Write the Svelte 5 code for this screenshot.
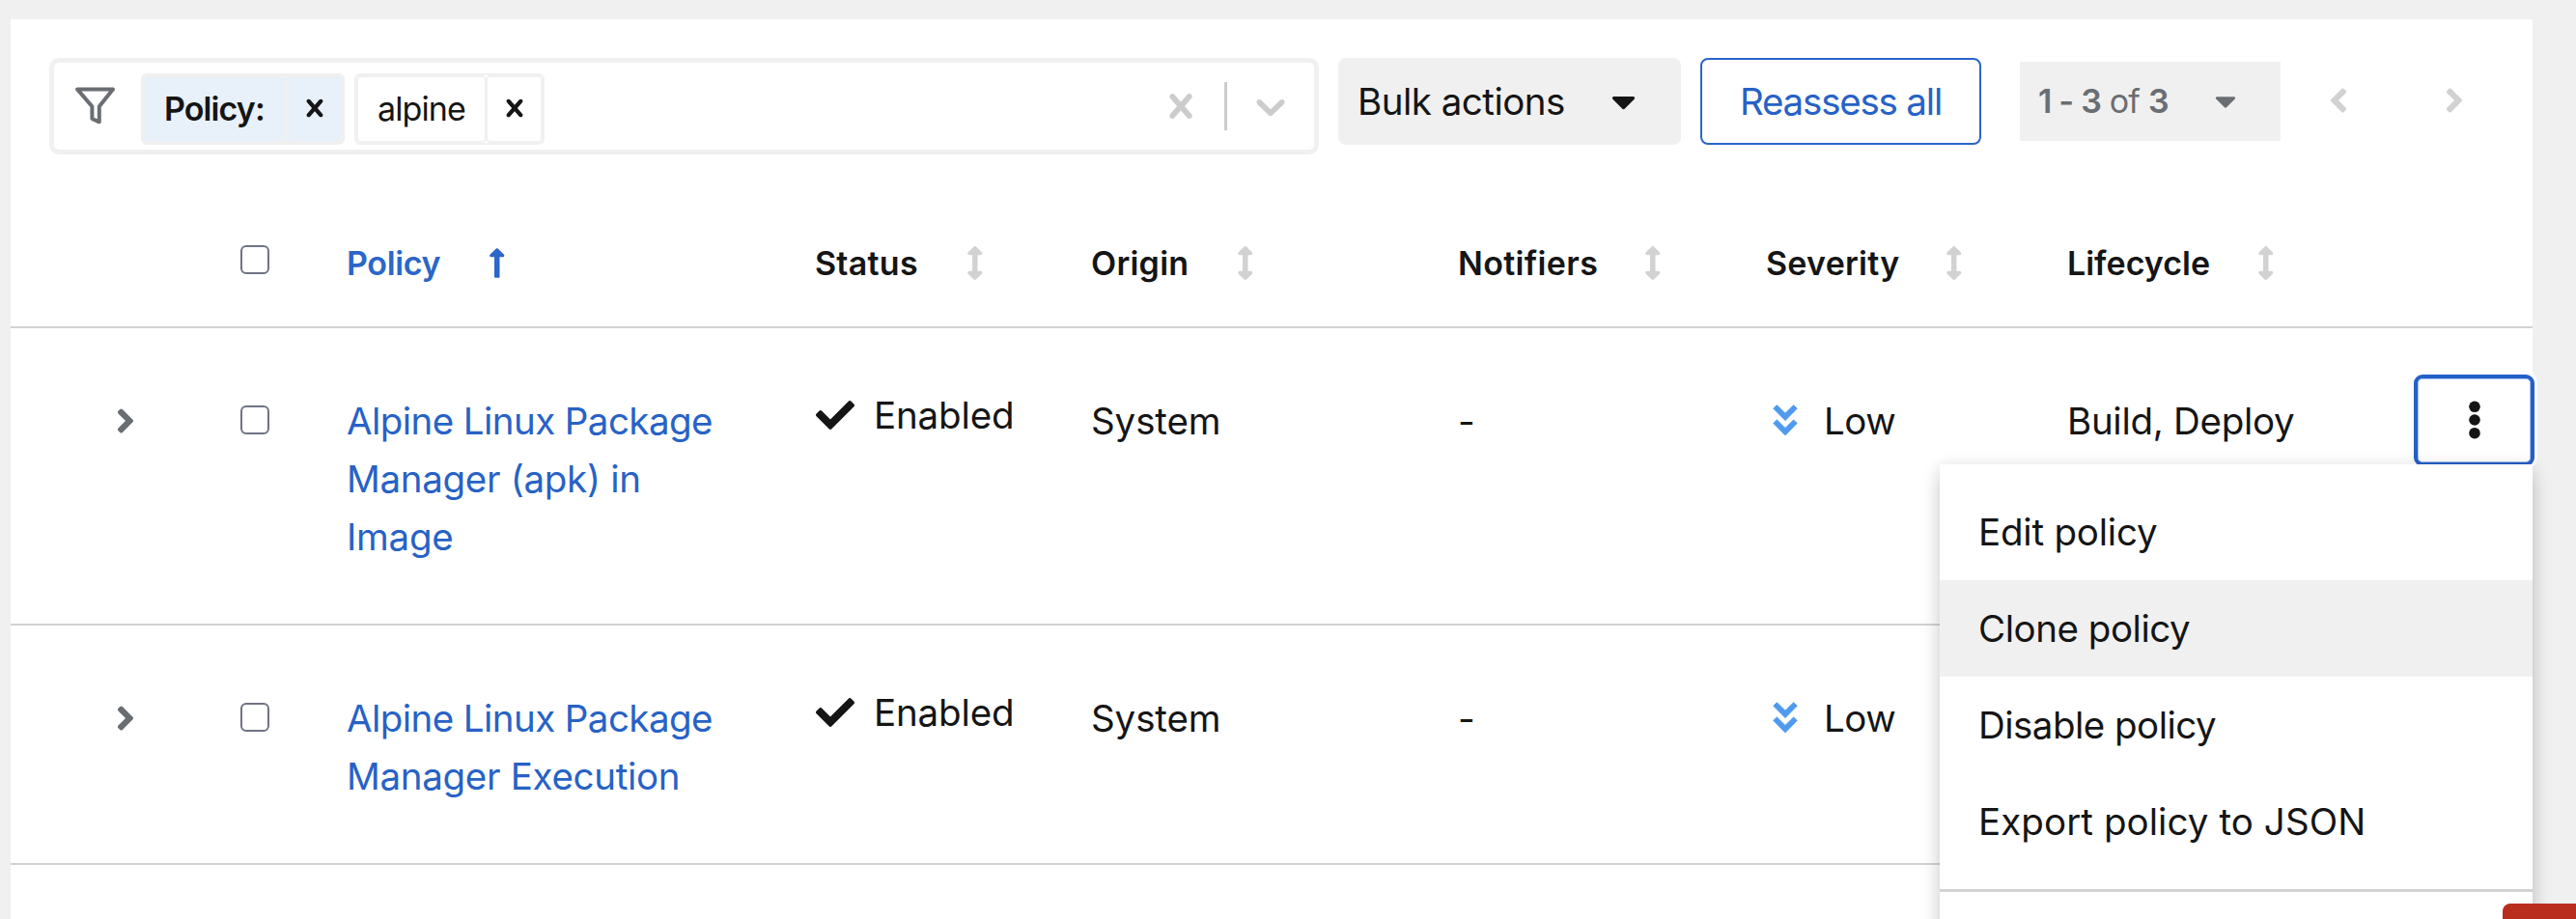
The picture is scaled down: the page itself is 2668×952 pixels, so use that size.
<script>
  const columns = [
    { label: 'Policy', sorted: true, cls: 'policy' },
    { label: 'Status', cls: 'status' },
    { label: 'Origin', cls: 'origin' },
    { label: 'Notifiers', cls: 'notifiers' },
    { label: 'Severity', cls: 'severity' },
    { label: 'Lifecycle', cls: 'lifecycle' }
  ];

  const policies = [
    {
      name: ['Alpine Linux Package', 'Manager (apk) in', 'Image'],
      status: 'Enabled', origin: 'System', notifiers: '-', severity: 'Low',
      lifecycle: 'Build, Deploy', menuOpen: true
    },
    {
      name: ['Alpine Linux Package', 'Manager Execution'],
      status: 'Enabled', origin: 'System', notifiers: '-', severity: 'Low',
      menuOpen: false
    }
  ];

  const actions = [
    { label: 'Edit policy', cls: 'edit' },
    { label: 'Clone policy', cls: 'clone', hover: true },
    { label: 'Disable policy', cls: 'disable' },
    { label: 'Export policy to JSON', cls: 'export' }
  ];
</script>

{#snippet cross(size)}
  <svg width={size} height={size} viewBox="0 0 20 20" fill="currentColor"><path d="M14.348 14.849c-0.469 0.469-1.229 0.469-1.697 0l-2.651-3.030-2.651 3.029c-0.469 0.469-1.229 0.469-1.697 0-0.469-0.469-0.469-1.229 0-1.697l2.758-3.15-2.759-3.152c-0.469-0.469-0.469-1.228 0-1.697s1.228-0.469 1.697 0l2.652 3.031 2.651-3.031c0.469-0.469 1.228-0.469 1.697 0s0.469 1.229 0 1.697l-2.758 3.152 2.758 3.15c0.469 0.469 0.469 1.229 0 1.698z" /></svg>
{/snippet}

{#snippet caret(w, h)}
  <svg width={w} height={h} viewBox="0 0 320 512" fill="currentColor"><path d="M31.3 192h257.3c17.8 0 26.7 21.5 14.1 34.1L174.1 354.7c-7.8 7.8-20.5 7.8-28.3 0L17.2 226.1C4.6 213.5 13.5 192 31.3 192z" /></svg>
{/snippet}

{#snippet angle()}
  <svg width="20" height="40" viewBox="0 0 256 512" fill="currentColor"><path d="M224.3 273l-136 136c-9.4 9.4-24.6 9.4-33.9 0l-22.6-22.6c-9.4-9.4-9.4-24.6 0-33.9l96.4-96.4-96.4-96.4c-9.4-9.4-9.4-24.6 0-33.9L54.3 103c9.4-9.4 24.6-9.4 33.9 0l136 136c9.5 9.4 9.5 24.6.1 34z" /></svg>
{/snippet}

<div class="page">
  <main class="card">
    <div class="toolbar">
      <div class="search">
        <svg class="filter" width="43" height="40" viewBox="0 0 43 40" fill="none" stroke="currentColor" stroke-width="4" stroke-linejoin="round"><path d="M3 3.4H40L25.8 21.2V37.3L18.4 34V21.2Z" /></svg>
        <div class="chip category">
          <span class="chip-label">Policy:</span>
          <button class="chip-close" aria-label="Remove">{@render cross(36)}</button>
        </div>
        <div class="chip value">
          <span class="chip-label">alpine</span>
          <button class="chip-close" aria-label="Remove">{@render cross(36)}</button>
        </div>
        <div class="indicators">
          {@render cross(50)}
          <span class="rule"></span>
          <svg width="50" height="50" viewBox="0 0 20 20" fill="currentColor"><path d="M4.516 7.548c0.436-0.446 1.043-0.481 1.576 0l3.908 3.747 3.908-3.747c0.533-0.481 1.141-0.446 1.574 0 0.436 0.445 0.408 1.197 0 1.615-0.406 0.418-4.695 4.502-4.695 4.502-0.217 0.223-0.502 0.335-0.787 0.335s-0.57-0.112-0.789-0.335c0 0-4.287-4.084-4.695-4.502s-0.436-1.17 0-1.615z" /></svg>
        </div>
      </div>
      <button class="bulk"><span>Bulk actions</span>{@render caret(25, 40)}</button>
      <button class="reassess">Reassess all</button>
      <div class="pagination">
        <button class="range"><span><b>1 - 3</b> of <b>3</b></span>{@render caret(22, 35)}</button>
        <button class="step prev" aria-label="Previous page">{@render angle()}</button>
        <button class="step" aria-label="Next page">{@render angle()}</button>
      </div>
    </div>

    <div class="row head">
      <span></span>
      <span class="box"></span>
      {#each columns as col}
        <div class={['th', col.cls, col.sorted && 'sorted']}>
          <span>{col.label}</span>
          <svg width="17.5" height="35" viewBox="0 0 256 512" fill="currentColor">
            {#if col.sorted}
              <path d="M88 166.059V468c0 6.627 5.373 12 12 12h56c6.627 0 12-5.373 12-12V166.059h46.059c21.382 0 32.09-25.851 16.971-40.971l-86.059-86.059c-9.373-9.373-24.569-9.373-33.941 0l-86.059 86.059c-15.119 15.119-4.411 40.971 16.971 40.971H88z" />
            {:else}
              <path d="M214.059 377.941H168V134.059h46.059c21.382 0 32.09-25.851 16.971-40.971L144.971 7.029c-9.373-9.373-24.568-9.373-33.941 0L24.971 93.088c-15.119 15.119-4.411 40.971 16.971 40.971H88v243.882H41.941c-21.382 0-32.09 25.851-16.971 40.971l86.059 86.059c9.373 9.373 24.568 9.373 33.941 0l86.059-86.059c15.12-15.119 4.412-40.971-16.97-40.971z" />
            {/if}
          </svg>
        </div>
      {/each}
    </div>

    {#each policies as p}
      <div class="row body">
        <span class="toggle">{@render angle()}</span>
        <span class="box"></span>
        <a class="name" href="#policy">{#each p.name as line}<span>{line}</span>{/each}</a>
        <div class="state">
          <svg width="40" height="40" viewBox="0 0 512 512" fill="currentColor"><path d="M173.898 439.404l-166.4-166.4c-9.997-9.997-9.997-26.206 0-36.204l36.203-36.204c9.997-9.998 26.207-9.998 36.204 0L192 312.69 432.095 72.596c9.997-9.997 26.207-9.997 36.204 0l36.203 36.204c9.997 9.997 9.997 26.206 0 36.204l-294.4 294.401c-9.998 9.997-26.207 9.997-36.204-.001z" /></svg>
          <span>{p.status}</span>
        </div>
        <span class="cell">{p.origin}</span>
        <span class="cell none">{p.notifiers}</span>
        <div class="level">
          <svg width="26" height="33" viewBox="0 0 26 33" fill="currentColor" stroke="currentColor" stroke-linejoin="round"><path d="M.8 4.2L4.4.8 13 9.3 21.6.8 25.2 4.2 13 16.6Z" /><path d="M.8 19.4L4.4 16 13 24.5 21.6 16 25.2 19.4 13 31.8Z" /></svg>
          <span>{p.severity}</span>
        </div>
        {#if p.menuOpen}
          <span class="cell stages">{p.lifecycle}</span>
          <div class="actions">
            <button class="kebab" aria-label="Actions">
              <svg width="14" height="42" viewBox="0 0 14 42" fill="currentColor"><circle cx="7" cy="7.3" r="5.8" /><circle cx="7" cy="21" r="5.8" /><circle cx="7" cy="34.7" r="5.8" /></svg>
            </button>
            <div class="menu">
              {#each actions as a}
                <div class={['item', a.cls, a.hover && 'hover']}>{a.label}</div>
              {/each}
              <hr />
            </div>
          </div>
        {/if}
      </div>
    {/each}
  </main>
  <div class="badge"></div>
</div>

<style>
  :global(body) { margin: 0; }
  .page {
    position: relative;
    box-sizing: border-box;
    width: 2668px;
    height: 952px;
    padding: 20px 45px 0 11px;
    background: #f0f0f0;
    overflow: hidden;
    font: 400 38.5px/60px Inter, "Liberation Sans", sans-serif;
    letter-spacing: -0.25px;
    color: #151515;
  }
  .page *, .page *::before { box-sizing: border-box; }
  svg { display: block; flex: none; }
  button { font: inherit; letter-spacing: inherit; color: inherit; background: none; border: 0; padding: 0; margin: 0; }
  .card { height: 932px; background: #fff; }

  .toolbar { display: flex; align-items: flex-start; padding: 40px 0 0 40px; height: 140px; }
  .search {
    display: flex;
    align-items: flex-start;
    width: 1315px;
    height: 100px;
    padding: 11px 20px 0 22px;
    border: 5px solid #f0f0f0;
    border-radius: 10px;
  }
  .filter { margin: 13px 26px 0 -1px; color: #6a6e73; }
  .chip {
    display: flex;
    height: 74px;
    margin-right: 10px;
    border: 2px solid #f0f0f0;
    border-radius: 6px;
    font-size: 34px;
    line-height: 66px;
    background: #fff;
  }
  .chip-label, .chip-close { display: block; border: 2px solid #f0f0f0; border-radius: 5px; }
  .chip-close { display: grid; place-items: center; margin-left: -1px; padding-bottom: 2px; }
  .category { width: 211px; font-weight: 600; background: #f0f0f0; }
  .category .chip-label, .category .chip-close { background: #e8f1fa; border-radius: 1px; }
  .category .chip-label { width: 150px; padding-left: 20px; letter-spacing: -0.9px; }
  .category .chip-close { width: 58px; }
  .value { width: 197px; }
  .value .chip-label { width: 135px; padding-left: 20px; letter-spacing: -0.9px; }
  .value .chip-close { width: 59px; }
  .indicators { display: flex; margin: 9px 0 0 auto; color: #ccc; }
  .rule { width: 3px; height: 50px; margin: 0 20px; background: #ccc; }

  .bulk { display: flex; align-items: center; width: 355px; height: 90px; margin-left: 20px; padding-left: 20px; border-radius: 8px; background: #f0f0f0; letter-spacing: -0.5px; }
  .bulk svg { margin: -1px 0 0 48px; }
  .reassess { width: 291px; height: 90px; margin-left: 20px; border: 2px solid #2b66c8; border-radius: 8px; color: #2762c6; letter-spacing: -1.2px; }
  .pagination { display: flex; align-items: center; height: 82px; margin: 4px 0 0 40px; }
  .range { display: flex; align-items: center; width: 270px; height: 82px; padding-left: 19px; background: #f0f0f0; color: #6a6e73; font-size: 34px; letter-spacing: -0.8px; white-space: nowrap; }
  .range b { font-weight: 600; }
  .range svg { margin: -1px 46px 0 auto; }
  .step { width: 20px; height: 40px; margin: -2px 0 0 100px; color: #d2d2d2; }
  .prev { margin-left: 50px; transform: scaleX(-1); }

  .row {
    display: grid;
    grid-template-columns: 238px 109px 486px 286px 378px 319px 314px 359px 125px;
    align-items: start;
    border-bottom: 2px solid #d2d2d2;
  }
  .box { width: 30px; height: 30px; border: 2px solid #6f7383; border-radius: 6px; background: #fff; }
  .head { height: 180px; }
  .head .box { margin-top: 94px; }
  .th { display: flex; margin-top: 88px; font-size: 34px; font-weight: 600; line-height: 50px; letter-spacing: 0.25px; }
  .th svg { margin-top: 7px; color: #d2d2d2; margin-left: auto; }
  .policy { width: 164px; margin-left: 1px; letter-spacing: -0.35px; }
  .status { width: 174px; }
  .origin { width: 168px; }
  .notifiers { width: 210px; margin-left: 2px; letter-spacing: 0.35px; }
  .severity { width: 203px; margin-left: 2px; }
  .lifecycle { width: 214px; letter-spacing: 0; }
  .sorted, .sorted svg { color: #2b66c8; }

  .body { padding: 66px 0 60px; white-space: nowrap; }
  .toggle { width: 20px; margin: 10px 0 0 109px; color: #6a6e73; }
  .body .box { margin-top: 14px; }
  .name { display: flex; flex-direction: column; margin-left: 1px; color: #2762c6; text-decoration: none; }
  .name span:first-child { letter-spacing: -0.57px; }
  .name span:nth-child(2) { letter-spacing: -0.3px; }
  .state { display: flex; margin: -6px 0 0 1px; letter-spacing: -0.15px; }
  .state svg { margin: 10px 20px 0 0; }
  .cell { letter-spacing: -0.1px; }
  .none { padding-left: 2px; }
  .stages { letter-spacing: -0.3px; }
  .level { display: flex; letter-spacing: -0.5px; margin-left: 9px; }
  .level svg { margin: 13px 27px 0 0; color: #4f9aee; }

  .actions { position: relative; height: 60px; }
  .kebab {
    display: grid;
    place-items: center;
    width: 125px;
    height: 95px;
    margin-top: -18px;
    border: 4px solid #2460c9;
    border-radius: 9px;
    background: #fff;
    box-shadow: 0 0 0 3px #fcfcfc, inset 0 0 0 1px #aac2ec;
  }
  .kebab svg { margin-top: -1px; }
  .menu {
    position: absolute;
    z-index: 2;
    top: 75px;
    right: 0;
    width: 614px;
    height: 520px;
    margin-right: 2px;
    padding-top: 20px;
    background: #fff;
    box-shadow: 0 10px 20px rgba(3, 3, 3, 0.16), 0 0 15px rgba(3, 3, 3, 0.08);
  }
  .item { height: 100px; padding: 20px 0 0 40px; letter-spacing: -0.2px; }
  .hover { background: #f0f0f0; }
  .clone { letter-spacing: -0.46px; }
  .disable { letter-spacing: -0.52px; }
  .export { letter-spacing: 0.08px; }
  hr { height: 3px; margin: 20px 0 0; border: 0; background: #d2d2d2; }
  .badge { position: absolute; z-index: 3; left: 2592px; top: 936px; width: 90px; height: 40px; border-radius: 8px; background: #b92d1f; }
</style>
